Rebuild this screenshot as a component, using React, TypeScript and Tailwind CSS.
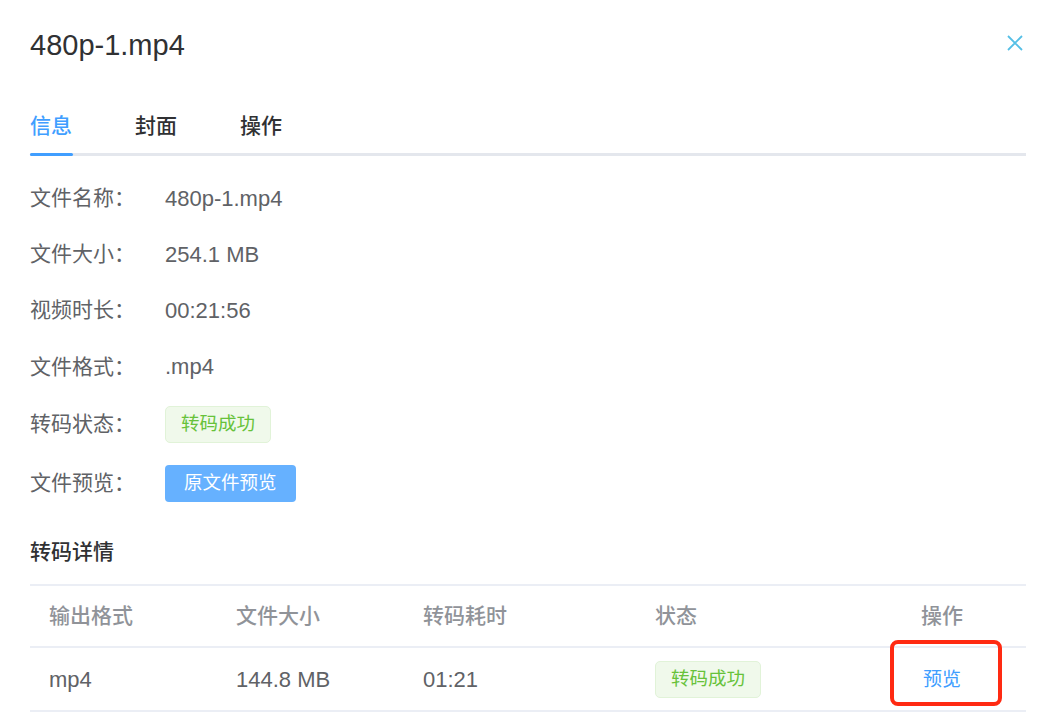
import React from "react";

const font = "font-['Liberation_Sans','Noto_Sans_CJK_SC',sans-serif]";

const Tag = () => (
  <span className="inline-flex h-[37px] items-center rounded-[5px] border border-[#e1f3d8] bg-[#f0f9eb] px-[15px] text-[18.5px] text-[#67c23a]">
    转码成功
  </span>
);

const rows: { label: string; h: string; value: React.ReactNode }[] = [
  { label: "文件名称：", h: "h-[56px]", value: "480p-1.mp4" },
  { label: "文件大小：", h: "h-[56px]", value: "254.1 MB" },
  { label: "视频时长：", h: "h-[56px]", value: "00:21:56" },
  { label: "文件格式：", h: "h-[57px]", value: ".mp4" },
  { label: "转码状态：", h: "h-[58px]", value: <Tag /> },
  {
    label: "文件预览：",
    h: "h-[60px]",
    value: (
      <button className="h-[37px] rounded-[4px] bg-[#66b1ff] px-[19px] text-[18.5px] text-white">
        原文件预览
      </button>
    ),
  },
];

const cols = ["w-[187px]", "w-[187px]", "w-[232px]", "w-[222px]"];

const App = () => {
  return (
    <div className={`${font} h-[720px] w-[1048px] overflow-hidden bg-white pl-[30px] pr-[22px]`}>
      {/* header */}
      <div className="flex h-[90px] items-center justify-between">
        <h1 className="text-[29px] leading-none text-[#303133]">480p-1.mp4</h1>
        <svg width="16" height="16" viewBox="0 0 16 16" className="mr-[3px] -mt-[5px]">
          <path d="M1 1 L15 15 M15 1 L1 15" stroke="#55bfe6" strokeWidth="1.8" fill="none" />
        </svg>
      </div>

      {/* tabs */}
      <div className="flex h-[63px] items-end gap-[63px] pb-[16px] text-[21px] font-medium leading-[22px]">
        <span className="text-[#409eff]">信息</span>
        <span className="text-[#303133]">封面</span>
        <span className="text-[#303133]">操作</span>
      </div>
      <div className="h-[3px] bg-[#e4e7ed]">
        <div className="h-[3px] w-[43px] rounded-full bg-[#409eff]" />
      </div>

      {/* info */}
      <div className="mt-[14px]">
        {rows.map((r) => (
          <div key={r.label} className={`flex items-center ${r.h}`}>
            <span className="w-[135px] text-[21px] text-[#606266]">{r.label}</span>
            <span className="text-[22px] text-[#606266]">{r.value}</span>
          </div>
        ))}
      </div>

      {/* transcode detail */}
      <div className="h-[71px] pt-[27px] text-[21px] font-medium leading-[24px] text-[#303133]">转码详情</div>

      <div className="border-t-2 border-[#ebeef5]">
        <div className="flex h-[62px] items-center border-b-2 border-[#ebeef5] text-[21px] font-medium text-[#909399]">
          <div className={`${cols[0]} pl-[19px]`}>输出格式</div>
          <div className={`${cols[1]} pl-[19px]`}>文件大小</div>
          <div className={`${cols[2]} pl-[19px]`}>转码耗时</div>
          <div className={`${cols[3]} pl-[19px]`}>状态</div>
          <div className="flex-1 text-center">操作</div>
        </div>
        <div className="flex h-[64px] items-center border-b-2 border-[#ebeef5] text-[22px] text-[#606266]">
          <div className={`${cols[0]} pl-[19px]`}>mp4</div>
          <div className={`${cols[1]} pl-[19px]`}>144.8 MB</div>
          <div className={`${cols[2]} pl-[19px]`}>01:21</div>
          <div className={`${cols[3]} pl-[19px]`}>
            <Tag />
          </div>
          <div className="relative flex h-full flex-1 items-center justify-center">
            <span className="mt-[2px] text-[19px] text-[#409eff]">预览</span>
            <div className="absolute left-[32px] top-[-8px] h-[66px] w-[112px] rounded-[8px] border-[4px] border-[#ff2a12]" />
          </div>
        </div>
      </div>
    </div>
  );
};

export default App;
